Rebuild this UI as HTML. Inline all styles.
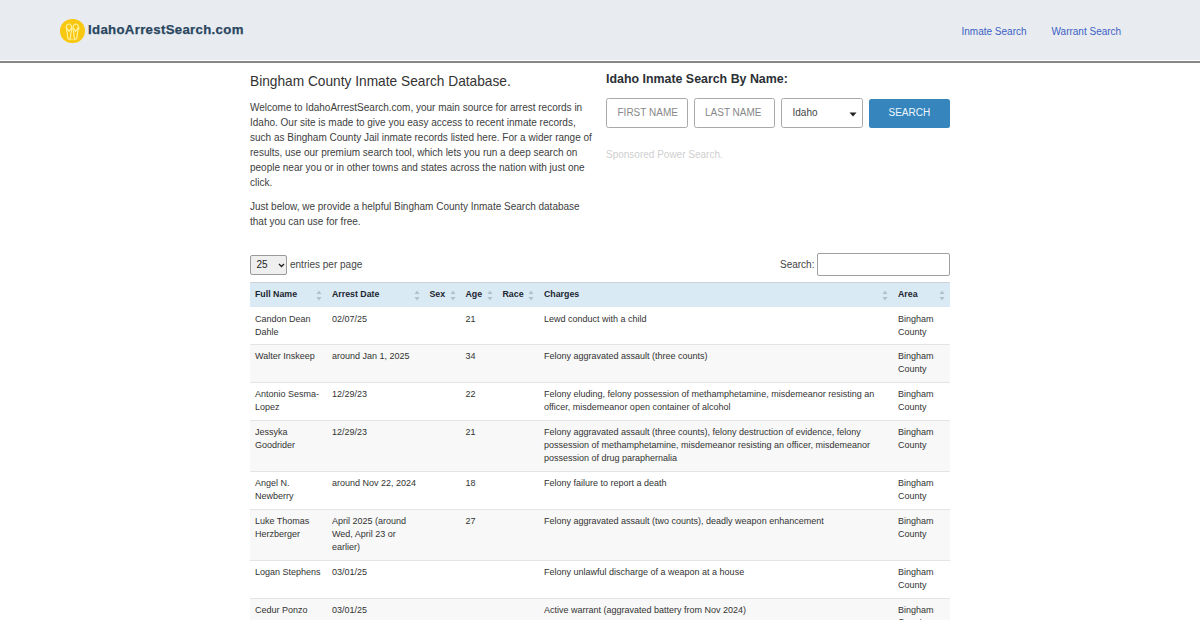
<!DOCTYPE html>
<html><head><meta charset="utf-8">
<style>
*{box-sizing:border-box;margin:0;padding:0}
html,body{width:1200px;height:620px;overflow:hidden;background:#fff}
body{font-family:"Liberation Sans",sans-serif;color:#333;position:relative}
.abs{position:absolute;white-space:nowrap}
#hdr{position:absolute;left:0;top:0;width:1200px;height:60px;background:#e8ecf0}
#hline{position:absolute;left:0;top:61px;width:1200px;height:2px;background:#878787}
#logo{position:absolute;left:60px;top:18.7px;width:24.7px;height:24.7px;border-radius:50%;background:#f8c70f}
#logotxt{left:88px;top:22.2px;font-size:13.2px;line-height:16px;font-weight:bold;color:#2a465f;letter-spacing:0.33px;-webkit-text-stroke:0.25px #2a465f}
.nav{top:25.5px;font-size:10px;line-height:12px;color:#3d5fc4}
#title{left:250px;top:74px;font-size:13.72px;line-height:16px;color:#333}
.para{left:250px;font-size:10px;line-height:15px;color:#404040}
#h2{left:606px;top:71.7px;font-size:12.4px;line-height:14px;font-weight:bold;color:#2b3035}
.inp{position:absolute;top:98px;height:30px;border:1px solid #a9a9a9;border-radius:2.5px;background:#fff}
.ph{font-size:10px;line-height:12px;color:#888;position:absolute;top:8.2px;white-space:nowrap}
#btn{position:absolute;left:869px;top:98.5px;width:81px;height:29.5px;background:#3686bd;border-radius:2.5px}
#btn span{position:absolute;left:19.5px;top:8.5px;font-size:10px;line-height:12px;color:#eef7ff}
#spons{left:606px;top:149px;font-size:10px;line-height:12px;color:#cfcfcf}
#len{position:absolute;left:250px;top:255px;width:36.5px;height:19.5px;border:1px solid #9a9a9a;border-radius:2px;background:#efefef}
#entries{left:290px;top:259px;font-size:10px;line-height:12px;color:#444}
#slabel{left:780px;top:258.7px;font-size:10px;line-height:12px;color:#444}
#sinp{position:absolute;left:817px;top:252.8px;width:133px;height:22.8px;border:1px solid #a0a0a0;border-radius:2px;background:#fff}
table{position:absolute;left:250px;top:282px;width:700px;border-collapse:collapse;table-layout:fixed;font-size:9px;line-height:13.3px;color:#333}
th{background:#d9eaf4;text-align:left;font-weight:bold;font-size:8.8px;color:#1c2630;height:24.5px;padding:0 5px;border-top:1px solid #c9d3d8;position:relative;white-space:nowrap}
td{vertical-align:top;padding:5.1px 5px 5.2px 5px;border-top:1px solid #e4e4e4}
tbody tr:first-child td{border-top:0;padding-top:6.1px;padding-bottom:4.1px}
tr.g td{background:#f8f8f8}
.s{position:absolute;right:5px;top:7px;width:6px;height:11px}
</style></head><body>
<div id="hdr"></div>
<div id="hline"></div>
<div id="logo"><svg width="25" height="25" viewBox="0 0 25 25"><g fill="none" stroke="#fff3a6" stroke-width="1.1" stroke-linejoin="round" stroke-linecap="round"><path d="M8.9 5C6.7 5 6.1 7.4 6.4 9.5C6.7 12 7.6 14 7.6 17C7.6 19.3 8.2 20.2 9.2 20.2C10.2 20.2 10.7 19.3 10.7 17C10.7 14 11.5 12 11.7 9.5C11.9 7.4 11.1 5 8.9 5z"/><path d="M6.9 9.2L9 12.4L11.3 9.2"/><path d="M15.8 5C13.6 5 12.8 7.4 13 9.5C13.2 12 14 14 14 17C14 19.3 14.5 20.2 15.5 20.2C16.5 20.2 17.1 19.3 17.1 17C17.1 14 18 12 18.3 9.5C18.6 7.4 18 5 15.8 5z"/><path d="M13.5 9.2L15.6 12.4L17.9 9.2"/><path d="M18.3 9.8l1-.8"/></g><path d="M9.3 20.6h6" stroke="#fff3a6" stroke-width="1" stroke-dasharray="1 .5"/></svg></div>
<div id="logotxt" class="abs">IdahoArrestSearch.com</div>
<div class="abs nav" style="left:961.5px">Inmate Search</div>
<div class="abs nav" style="left:1051.5px">Warrant Search</div>

<div id="title" class="abs">Bingham County Inmate Search Database.</div>
<div class="abs para" style="top:100px">Welcome to IdahoArrestSearch.com, your main source for arrest records in<br>Idaho. Our site is made to give you easy access to recent inmate records,<br>such as Bingham County Jail inmate records listed here. For a wider range of<br>results, use our premium search tool, which lets you run a deep search on<br>people near you or in other towns and states across the nation with just one<br>click.</div>
<div class="abs para" style="top:199px">Just below, we provide a helpful Bingham County Inmate Search database<br>that you can use for free.</div>

<div id="h2" class="abs">Idaho Inmate Search By Name:</div>
<div class="inp" style="left:606px;width:82px"><span class="ph" style="left:10.5px">FIRST NAME</span></div>
<div class="inp" style="left:693.5px;width:81.5px"><span class="ph" style="left:10.5px">LAST NAME</span></div>
<div class="inp" style="left:781px;width:81.5px"><span class="ph" style="left:10.5px;color:#444">Idaho</span>
<svg style="position:absolute;left:67px;top:13px" width="8" height="5" viewBox="0 0 8 5"><path d="M0.5 0.5h7L4 4.5z" fill="#222"/></svg></div>
<div id="btn"><span>SEARCH</span></div>
<div id="spons" class="abs">Sponsored Power Search.</div>

<div id="len"><span class="abs" style="left:5.5px;top:3px;font-size:10px;line-height:12px;color:#222">25</span>
<svg style="position:absolute;left:27px;top:6.5px" width="7" height="5" viewBox="0 0 7 5"><path d="M1 1l2.5 2.5L6 1" fill="none" stroke="#222" stroke-width="1.4"/></svg></div>
<div id="entries" class="abs">entries per page</div>
<div id="slabel" class="abs">Search:</div>
<div id="sinp"></div>

<table>
<colgroup><col style="width:77px"><col style="width:97.5px"><col style="width:36px"><col style="width:37px"><col style="width:41.5px"><col style="width:354px"><col style="width:57px"></colgroup>
<thead><tr>
<th>Full Name<svg class="s" viewBox="0 0 6 11"><path d="M3 0.5L5.5 4H0.5z M3 10.5L5.5 7H0.5z" fill="#b3c0c8"/></svg></th>
<th>Arrest Date<svg class="s" viewBox="0 0 6 11"><path d="M3 0.5L5.5 4H0.5z M3 10.5L5.5 7H0.5z" fill="#b3c0c8"/></svg></th>
<th>Sex<svg class="s" viewBox="0 0 6 11"><path d="M3 0.5L5.5 4H0.5z M3 10.5L5.5 7H0.5z" fill="#b3c0c8"/></svg></th>
<th>Age<svg class="s" viewBox="0 0 6 11"><path d="M3 0.5L5.5 4H0.5z M3 10.5L5.5 7H0.5z" fill="#b3c0c8"/></svg></th>
<th>Race<svg class="s" viewBox="0 0 6 11"><path d="M3 0.5L5.5 4H0.5z M3 10.5L5.5 7H0.5z" fill="#b3c0c8"/></svg></th>
<th>Charges<svg class="s" viewBox="0 0 6 11"><path d="M3 0.5L5.5 4H0.5z M3 10.5L5.5 7H0.5z" fill="#b3c0c8"/></svg></th>
<th>Area<svg class="s" viewBox="0 0 6 11"><path d="M3 0.5L5.5 4H0.5z M3 10.5L5.5 7H0.5z" fill="#b3c0c8"/></svg></th>
</tr></thead>
<tbody>
<tr><td>Candon Dean Dahle</td><td>02/07/25</td><td></td><td>21</td><td></td><td>Lewd conduct with a child</td><td>Bingham County</td></tr>
<tr class="g"><td>Walter Inskeep</td><td>around Jan 1, 2025</td><td></td><td>34</td><td></td><td>Felony aggravated assault (three counts)</td><td>Bingham County</td></tr>
<tr><td>Antonio Sesma-Lopez</td><td>12/29/23</td><td></td><td>22</td><td></td><td>Felony eluding, felony possession of methamphetamine, misdemeanor resisting an officer, misdemeanor open container of alcohol</td><td>Bingham County</td></tr>
<tr class="g"><td>Jessyka Goodrider</td><td>12/29/23</td><td></td><td>21</td><td></td><td>Felony aggravated assault (three counts), felony destruction of evidence, felony possession of methamphetamine, misdemeanor resisting an officer, misdemeanor possession of drug paraphernalia</td><td>Bingham County</td></tr>
<tr><td>Angel N. Newberry</td><td>around Nov 22, 2024</td><td></td><td>18</td><td></td><td>Felony failure to report a death</td><td>Bingham County</td></tr>
<tr class="g"><td>Luke Thomas Herzberger</td><td>April 2025 (around Wed, April 23 or earlier)</td><td></td><td>27</td><td></td><td>Felony aggravated assault (two counts), deadly weapon enhancement</td><td>Bingham County</td></tr>
<tr><td>Logan Stephens</td><td>03/01/25</td><td></td><td></td><td></td><td>Felony unlawful discharge of a weapon at a house</td><td>Bingham County</td></tr>
<tr class="g"><td>Cedur Ponzo</td><td>03/01/25</td><td></td><td></td><td></td><td>Active warrant (aggravated battery from Nov 2024)</td><td>Bingham<br><span style="position:relative;top:-0.8px">County</span></td></tr>
</tbody></table>
</body></html>
